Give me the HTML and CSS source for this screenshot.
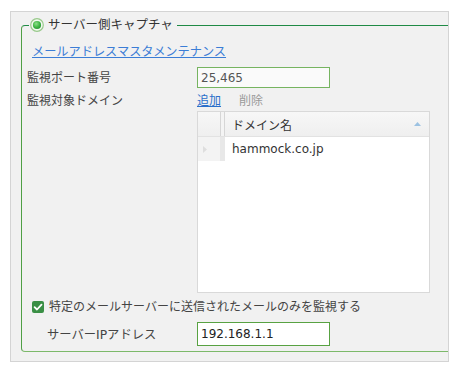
FILE: index.html
```html
<!DOCTYPE html>
<html lang="ja">
<head>
<meta charset="utf-8">
<link rel="stylesheet" href="styles.css">
</head>
<body>
<div class="panel">
  <fieldset class="group">
    <legend class="group-title">
      <svg class="radio" width="14" height="14" viewBox="0 0 14 14">
        <defs>
          <radialGradient id="rg" cx="0.4" cy="0.35" r="0.7">
            <stop offset="0" stop-color="#8ee08a"/>
            <stop offset="0.6" stop-color="#3fb645"/>
            <stop offset="1" stop-color="#2a9535"/>
          </radialGradient>
        </defs>
        <circle cx="7" cy="7" r="6.3" fill="#f3f9f0" stroke="#98c98b" stroke-width="1.2"/>
        <circle cx="7" cy="7" r="4.1" fill="url(#rg)"/>
      </svg>
      <span>サーバー側キャプチャ</span>
    </legend>

    <div class="link-row"><a class="link">メールアドレスマスタメンテナンス</a></div>

    <div class="row port-row">
      <div class="label">監視ポート番号</div>
      <div class="textbox port">25,465</div>
    </div>

    <div class="row domain-row">
      <div class="label">監視対象ドメイン</div>
      <div class="actions"><a class="link add">追加</a><span class="disabled">削除</span></div>
    </div>

    <div class="grid">
      <div class="grid-head">
        <div class="rh"></div>
        <div class="sep"></div>
        <div class="col-title">ドメイン名</div>
        <svg class="sort" width="7" height="4" viewBox="0 0 7 4"><path d="M0 4 L3.5 0 L7 4 Z" fill="#9cc2e2"/></svg>
      </div>
      <div class="grid-row">
        <div class="rh body-rh"><svg class="tri" width="4" height="7" viewBox="0 0 4 7"><path d="M0 0 L4 3.5 L0 7 Z" fill="#dedede"/></svg></div>
        <div class="strip"></div>
        <div class="cell">hammock.co.jp</div>
      </div>
    </div>

    <div class="check-row">
      <svg class="check" width="12" height="12" viewBox="0 0 12 12">
        <rect x="0" y="0" width="12" height="12" rx="2" fill="#3a8f45"/>
        <path d="M2.6 6.2 L5 8.5 L9.5 3.6" fill="none" stroke="#ffffff" stroke-width="1.8" stroke-linecap="round" stroke-linejoin="round"/>
      </svg>
      <span class="check-label">特定のメールサーバーに送信されたメールのみを監視する</span>
    </div>

    <div class="row ip-row">
      <div class="label indent">サーバーIPアドレス</div>
      <div class="textbox ip">192.168.1.1</div>
    </div>
  </fieldset>
</div>
</body>
</html>
```

FILE: styles.css
```css
html, body {
  margin: 0;
  padding: 0;
  background: #ffffff;
}
body {
  font-family: "DejaVu Sans", "Noto Sans CJK JP", sans-serif;
  font-size: 12px;
  color: #444444;
}
.panel {
  box-sizing: border-box;
  margin: 11px 0 0 10px;
  width: 439px;
  height: 351px;
  border: 1px solid #d4d4d4;
  background: #f1f1f1;
  overflow: hidden;
}
.group {
  box-sizing: border-box;
  margin: 6px 0 0 10px;
  width: 450px;
  padding: 0 5px 5px 5px;
  border-style: solid;
  border-width: 1px;
  border-top-color: #1f8a45;
  border-left-color: #4f9f45;
  border-bottom-color: #7cb96a;
  border-right-color: #7cb96a;
  border-radius: 4px 0 0 4px;
}
.group-title {
  display: flex;
  align-items: center;
  height: 14px;
  margin-left: 2px;
  padding: 0 4px 0 1px;
  font-size: 12.5px;
  line-height: 14px;
  color: #333333;
}
.radio {
  display: block;
  margin-right: 4px;
}
.link-row {
  margin-top: 12px;
  height: 16px;
  line-height: 16px;
  padding-left: 5px;
  font-size: 12.2px;
}
.link {
  color: #3b7dd6;
  text-decoration: underline;
}
.row {
  display: flex;
  align-items: center;
}
.label {
  width: 170px;
  flex: none;
}
.label.indent {
  box-sizing: border-box;
  padding-left: 20px;
}
.port-row {
  margin-top: 7px;
  height: 21px;
}
.port-row .label {
  padding-bottom: 2px;
}
.textbox {
  box-sizing: border-box;
  width: 133px;
  padding-left: 3px;
  display: flex;
  align-items: center;
}
.port {
  height: 21px;
  background: #fafafa;
  border: 1px solid #76b460;
  color: #555555;
}
.domain-row {
  margin-top: 5px;
  height: 16px;
  line-height: 16px;
}
.actions {
  display: flex;
  gap: 18px;
}
.add {
  color: #2b6fca;
}
.disabled {
  color: #9a9a9a;
}
.grid {
  box-sizing: border-box;
  margin-left: 170px;
  margin-top: 2px;
  width: 233px;
  height: 182px;
  border: 1px solid #d9d9d9;
  background: #ffffff;
}
.grid-head {
  display: flex;
  align-items: center;
  height: 24px;
  background: linear-gradient(#f7f7f7, #efefef);
  border-bottom: 1px solid #e2e2e2;
  color: #333333;
}
.grid-head .rh {
  width: 22px;
  height: 100%;
}
.sep {
  box-sizing: border-box;
  width: 5px;
  height: 100%;
  border-left: 1px solid #d6d6d6;
  border-right: 1px solid #d6d6d6;
  background: #f4f4f4;
}
.col-title {
  flex: 1;
  padding-left: 7px;
}
.sort {
  display: block;
  margin-right: 8px;
}
.grid-row {
  display: flex;
  align-items: center;
  height: 24px;
}
.body-rh {
  box-sizing: border-box;
  width: 22px;
  height: 100%;
  background: #f3f3f3;
  display: flex;
  align-items: center;
  padding-left: 5px;
}
.tri {
  display: block;
}
.strip {
  width: 5px;
  height: 100%;
  background: #e8e8e8;
}
.cell {
  flex: 1;
  padding-left: 7px;
  color: #333333;
}
.check-row {
  margin-top: 6px;
  height: 16px;
  display: flex;
  align-items: center;
  padding-left: 5px;
}
.check {
  display: block;
  margin-right: 5px;
}
.check-label {
  line-height: 16px;
}
.ip-row {
  margin-top: 7px;
  height: 24px;
}
.ip-row .label {
  font-size: 12.3px;
}
.ip {
  height: 24px;
  background: #ffffff;
  border: 1px solid #58a242;
  color: #222222;
}
```
